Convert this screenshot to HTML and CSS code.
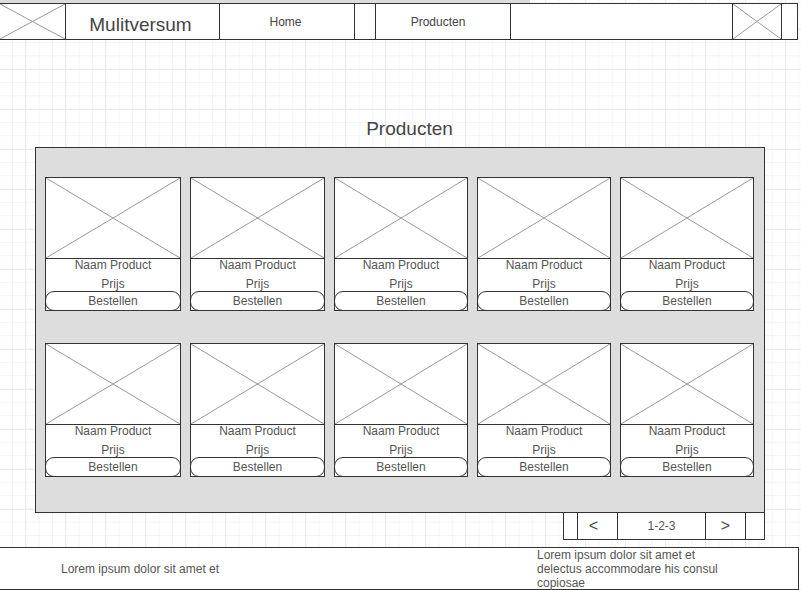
FILE: index.html
```html
<!DOCTYPE html>
<html lang="nl">
<head>
<meta charset="utf-8">
<title>Mulitversum</title>
<link rel="stylesheet" href="styles.css">
</head>
<body>
<div class="strip"></div>
<header class="topbar">
  <div class="cell c-logo"><svg class="xph" viewBox="0 0 10 10" preserveAspectRatio="none"><line x1="0" y1="0" x2="10" y2="10"/><line x1="10" y1="0" x2="0" y2="10"/></svg></div>
  <div class="cell c-brand">Mulitversum</div>
  <div class="cell c-home">Home</div>
  <div class="cell c-sep"></div>
  <div class="cell c-prod">Producten</div>
  <div class="cell c-empty"></div>
  <div class="cell c-icon"><svg class="xph" viewBox="0 0 10 10" preserveAspectRatio="none"><line x1="0" y1="0" x2="10" y2="10"/><line x1="10" y1="0" x2="0" y2="10"/></svg></div>
  <div class="cell c-end"></div>
</header>

<h1 class="title">Producten</h1>

<main class="panel">
  <div class="cards" id="cards"></div>
</main>

<nav class="pager">
  <div class="pg pg-edge"></div>
  <div class="pg pg-arrow pg-prev">&lt;</div>
  <div class="pg pg-num">1-2-3</div>
  <div class="pg pg-arrow pg-next">&gt;</div>
  <div class="pg pg-edge pg-last"></div>
</nav>

<footer class="footer">
  <div class="foot-left">Lorem ipsum dolor sit amet et</div>
  <div class="foot-right">Lorem ipsum dolor sit amet et<br>delectus accommodare his consul<br>copiosae</div>
</footer>

<script>
(function(){
  var html = '';
  for (var i = 0; i < 10; i++) {
    html += '<div class="card">' +
      '<div class="img"><svg class="xph" viewBox="0 0 10 10" preserveAspectRatio="none"><line x1="0" y1="0" x2="10" y2="10"/><line x1="10" y1="0" x2="0" y2="10"/></svg></div>' +
      '<div class="name">Naam Product</div>' +
      '<div class="price">Prijs</div>' +
      '<div class="btn">Bestellen</div>' +
      '</div>';
  }
  document.getElementById('cards').innerHTML = html;
})();
</script>
</body>
</html>
```

FILE: styles.css
```css
* { box-sizing: border-box; }
html, body { margin: 0; padding: 0; }
body {
  width: 801px;
  height: 590px;
  overflow: hidden;
  font-family: "Liberation Sans", Arial, sans-serif;
  color: #555;
  background-color: #fff;
  background-image:
    linear-gradient(to right, #ebebeb 1px, transparent 1px),
    linear-gradient(to bottom, #ebebeb 1px, transparent 1px),
    linear-gradient(to right, #f4f4f4 1px, transparent 1px),
    linear-gradient(to bottom, #f4f4f4 1px, transparent 1px);
  background-size: 40px 40px, 40px 40px, 13.333px 13.333px, 13.333px 13.333px;
  background-position: 25px 29px, 25px 29px, 12px 2px, 12px 2px;
}
.strip {
  height: 3px;
  width: 530px;
  background: #dcdcdc;
}
.topbar {
  display: flex;
  width: 798px;
  height: 37px;
  border-top: 1px solid #333;
  border-bottom: 1px solid #333;
  background: #fff;
}
.cell {
  height: 100%;
  border-right: 1px solid #333;
  display: flex;
  align-items: center;
  justify-content: center;
  flex: none;
}
.c-logo { width: 66px; }
.c-brand { width: 154px; font-size: 19px; color: #444; padding-top: 7px; padding-right: 4px; }
.c-home { width: 135px; font-size: 12px; color: #444; padding-right: 3px; }
.c-sep { width: 21px; }
.c-prod { width: 135px; font-size: 12px; color: #444; padding-right: 10px; }
.c-empty { width: 222px; }
.c-icon { width: 49px; }
.c-end { flex: 1; }
.xph {
  display: block;
  width: 100%;
  height: 100%;
}
.xph line {
  stroke: #999;
  stroke-width: 1;
  vector-effect: non-scaling-stroke;
}
.title {
  margin: 0;
  padding: 79px 0 0 18px;
  height: 107px;
  font-size: 19px;
  font-weight: normal;
  color: #444;
  text-align: center;
  line-height: 20px;
}
.panel {
  margin-left: 35px;
  width: 730px;
  height: 366px;
  background: #dddddd;
  border: 1px solid #333;
  padding: 29px 10px 0 9px;
}
.cards {
  display: grid;
  grid-template-columns: 136px 135px 134px 134px 134px;
  column-gap: 9px;
  row-gap: 32px;
}
.card {
  height: 134px;
  border: 1px solid #333;
  background: #fff;
  display: flex;
  flex-direction: column;
}
.img {
  height: 81px;
  flex: none;
  border-bottom: 1px solid #333;
}
.name, .price {
  flex: none;
  font-size: 12px;
  text-align: center;
  color: #555;
}
.name { height: 15px; line-height: 13px; }
.price { height: 17px; line-height: 20px; }
.btn {
  flex: none;
  margin: 0 -1px -1px -1px;
  height: 20px;
  border: 1px solid #333;
  border-radius: 9px;
  font-size: 12px;
  text-align: center;
  line-height: 18px;
  color: #555;
}
.pager {
  display: flex;
  margin-left: 563px;
  width: 202px;
  height: 28px;
  margin-top: -1px;
  border: 1px solid #333;
  background: #fff;
}
.pg {
  height: 100%;
  border-right: 1px solid #333;
  display: flex;
  align-items: center;
  justify-content: center;
  font-size: 12px;
  color: #555;
}
.pg-edge { width: 14px; }
.pg-last { border-right: none; flex: 1; }
.pg-arrow { width: 40px; font-size: 16px; color: #444; }
.pg-prev { padding-right: 8px; }
.pg-next { padding-left: 0; }
.pg-num { width: 88px; }
.footer {
  margin-top: 7px;
  width: 799px;
  height: 43px;
  border-top: 1px solid #333;
  border-bottom: 1px solid #333;
  border-right: 1px solid #333;
  background: #fff;
  display: flex;
  font-size: 12px;
  color: #555;
}
.foot-left {
  padding-left: 61px;
  padding-top: 14px;
  width: 537px;
}
.foot-right {
  line-height: 14px;
}
```
